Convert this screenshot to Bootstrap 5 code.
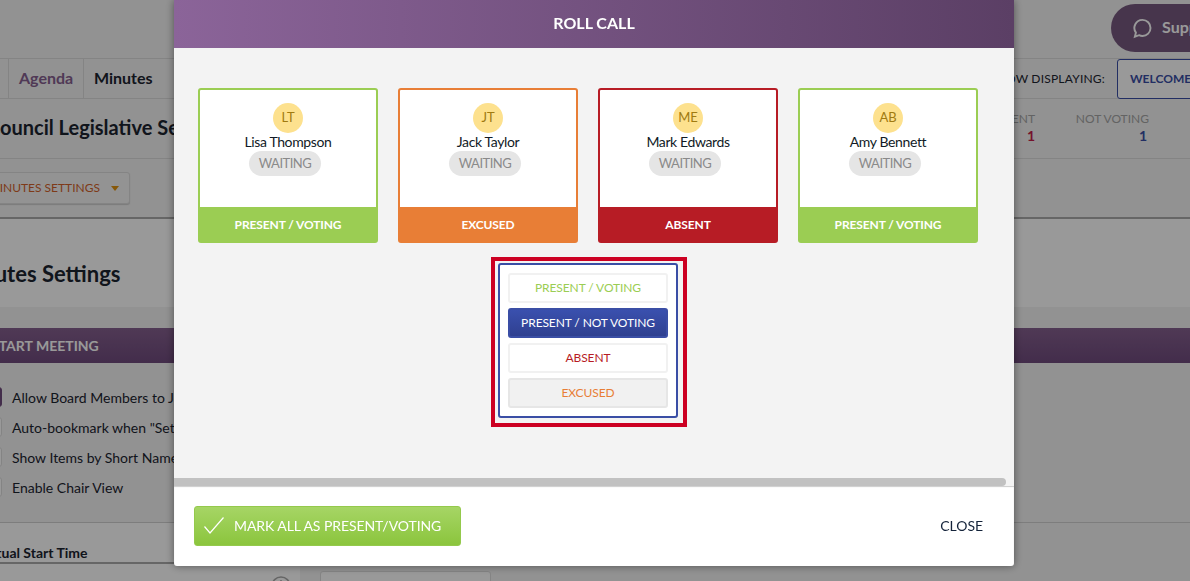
<!DOCTYPE html>
<html>
  <head>
    <title>Roll Call</title>
    <link href="https://cdn.jsdelivr.net/npm/bootstrap@5.3.3/dist/css/bootstrap.min.css" rel="stylesheet" />
    <style>
      html, body { height: 100%; overflow: hidden; }
      body { font-family: Lato, "Liberation Sans", sans-serif; color: #1c2430; background: #f3f3f3; }

      /* page behind the dialog */
      .page-wrap { width: 1190px; height: 581px; overflow: hidden; }
      .top-strip { height: 58px; padding-top: 4px; }
      .support-pill { width: 130px; height: 48px; margin-right: -51px; padding-left: 21px; border-radius: 24px 0 0 24px; background: #77597f; color: #fff; font-weight: 700; font-size: 16px; gap: 9px; }
      .support-pill span { margin-top: -2px; }
      .tab-strip { height: 41px; border-top: 1px solid #dcdcdc; border-bottom: 1px solid #dcdcdc; white-space: nowrap; }
      .tab-cell { height: 100%; padding: 0 10px 2px; border-left: 1px solid #dcdcdc; font-size: 16px; font-weight: 700; width: 75px; }
      .tab-cell.agenda { color: #85608f; }
      .tab-cell.minutes { color: #1c2430; padding-left: 10px; }
      .now-label { font-size: 12px; margin-right: 12px; letter-spacing: .2px; }
      .welcome-btn { height: 40px; width: 120px; padding: 0 12px; margin-right: -47px; border: 1px solid #3a4ea5; border-radius: 3px; background: #fff; color: #3a4ea5; font-weight: 700; font-size: 12px; }
      .title-strip { height: 60px; border-bottom: 1px solid #dcdcdc; }
      .page-title { margin: -4px 0 0 -13px; font-size: 20px; font-weight: 700; white-space: nowrap; }
      .stat-box { font-size: 12px; color: #a5a5a5; text-align: right; width: 74px; margin-left: 40px; line-height: 15px; padding-top: 13px; }
      .stat-box b { display: block; font-size: 14px; line-height: 19px; padding-right: 1px; }
      .stat-box .num-red { color: #c41e4a; padding-right: 0; }
      .stat-box .num-blue { color: #3a4ea5; padding-right: 2px; }
      .stat-strip { margin-right: -73px; }
      .tool-strip { height: 60px; padding-top: 13px; border-bottom: 2px solid #aaa; }
      .settings-btn { height: 32px; padding: 0 10px 0 0; margin-left: -10px; border: 1px solid #ddd; border-radius: 3px; background: #f6f6f6; color: #d2622a; font-size: 12px; gap: 11px; width: 140px; justify-content: flex-end; white-space: nowrap; box-shadow: 0 1px 1px #ccc; }
      .caret-down { width: 0; height: 0; border-left: 4px solid transparent; border-right: 4px solid transparent; border-top: 5px solid #e2930f; }
      .head-strip { height: 88px; background: #fff; padding-top: 42px; }
      .head-strip h2 { margin: 0 0 0 -44px; font-size: 22px; font-weight: 700; white-space: nowrap; }
      .gap-strip { height: 21px; }
      .purple-strip { height: 35px; background: linear-gradient(#85608f, #704b7d); color: #fff; font-size: 14px; font-weight: 700; }
      .purple-strip span { margin-left: -9px; white-space: nowrap; }
      .check-list { padding-top: 19px; height: 160px; border-bottom: 1px solid #d0d0d0; }
      .check-row { height: 30px; font-size: 14px; white-space: nowrap; }
      .check-box { width: 20px; height: 20px; margin-left: -18px; margin-right: 10px; border: 1px solid #ddd; border-radius: 3px; background: #fff; flex: none; }
      .check-box.on { background: #704b7d; border-color: #704b7d; }
      .time-left { width: 300px; height: 200px; background: #fff; }
      .time-label { height: 41px; border-bottom: 2px solid #aaa; padding-top: 19px; font-size: 14px; font-weight: 700; }
      .time-label span { margin-left: -20px; white-space: nowrap; }
      .clock-row { padding: 12px 9px 0 0; }
      .time-right { padding: 48px 0 0 20px; }
      .time-input { width: 171px; height: 40px; border: 1px solid #ddd; border-radius: 3px; background: #fff; }

      /* dimming layer and dialog */
      .dim-layer { position: fixed; inset: 0; background: rgba(0, 0, 0, .4); }
      .roll-dialog { position: fixed; left: 174px; top: 0; width: 840px; height: 566px; border: 0; border-radius: 0 0 3px 3px; overflow: hidden; box-shadow: 0 0 8px rgba(0, 0, 0, .45); background: #fff; }
      .roll-head { height: 48px; padding: 0 0 2px; border: 0; border-radius: 0; background: linear-gradient(to right, #8b6499, #5b3f65); color: #fff; font-size: 16px; font-weight: 700; justify-content: center; box-shadow: 0 1px 1px #ddd; }
      .roll-body { height: 430px; flex: none; padding: 40px 0 0 24px; background: #f3f3f3; }
      .member-list { width: 782px; gap: 20px; margin-bottom: 14px; }
      .pick-area { width: 782px; }
      .member-tile { width: 180px; height: 155px; border-width: 2px; border-radius: 3px; }
      .member-tile.green { border-color: #9bcd53; }
      .member-tile.orange { border-color: #e87e36; }
      .member-tile.red { border-color: #b71c25; }
      .tile-main { height: 117px; flex: none; padding-top: 13px; }
      .avatar-dot { width: 30px; height: 30px; border-radius: 50%; background: #fde18e; color: #a07a10; font-size: 13px; }
      .member-name { font-size: 14px; line-height: 18px; letter-spacing: -.38px; color: #111a26; }
      .wait-pill { width: 72px; height: 25px; margin: 0 6px 0 0; padding-top: 1px; border-radius: 13px; background: #e5e5e5; color: #8a8a8a; font-size: 13px; letter-spacing: -.5px; }
      .tile-status { flex: 1 1 auto; padding-top: 2px; color: #fff; font-size: 12px; font-weight: 700; letter-spacing: -.12px; }
      .green .tile-status { background: #9bcd53; }
      .orange .tile-status { background: #e87e36; }
      .red .tile-status { background: #b71c25; }
      .pick-mark { width: 196px; height: 170px; padding: 2px 5px 5px 3px; border: 4px solid #cc0022; }
      .pick-box { width: 180px; height: 155px; padding: 8px; gap: 5px; border: 2px solid #3a4ea5; border-radius: 3px; background: #fff; }
      .pick-btn { height: 30px; padding: 0; border: 2px solid #f1f1f1; border-radius: 3px; background: #fff; font-size: 12px; line-height: 1; letter-spacing: -.1px; }
      .pick-btn.p-voting { color: #9bcd53; }
      .pick-btn.p-not { background: linear-gradient(#3a50ae, #2f4090); border-color: #3a4ea5; color: #fff; }
      .pick-btn.p-absent { color: #b71c25; }
      .pick-btn.p-excused { background: #f1f1f1; border-color: #e6e6e6; color: #e87e36; }
      .fake-scroll { height: 8px; flex: none; width: 832px; background: #c1c1c1; border-radius: 0 4px 4px 0; }
      .scroll-row { background: #f3f3f3; }
      .roll-foot { height: 80px; padding: 20px 31px 20px 20px; border: 0; border-radius: 0; box-shadow: inset 0 1px 1px #ccc; }
      .mark-all { width: 267px; height: 40px; padding: 0 0 2px 9px; margin: 0; gap: 10px; border: 1px solid #94c94c; border-radius: 3px; background: linear-gradient(#a6d565, #8bc53d); color: #fff; font-size: 14px; letter-spacing: -.08px; }
      .close-link { margin: 0 0 2px; padding: 0; border: 0; background: none; color: #14233a; font-size: 14px; letter-spacing: -.05px; }
    </style>
  </head>
  <body>
    <div class="page-wrap">
      <div class="top-strip d-flex justify-content-end">
        <div class="support-pill d-flex align-items-center">
          <svg width="21" height="21" viewBox="0 0 22 22" fill="none" stroke="#fff" stroke-width="2"><path d="M11 2a8.4 8.4 0 0 1 0 16.8c-1.3 0-2.500-.3-3.600-.8L3 19.600l1.100-4.300A8.400 8.400 0 0 1 11 2z" /></svg>
          <span>Support</span>
        </div>
      </div>
      <div class="tab-strip d-flex align-items-center">
        <div class="d-flex align-items-center h-100 ms-2">
          <div class="tab-cell agenda d-flex align-items-center">Agenda</div>
          <div class="tab-cell minutes d-flex align-items-center">Minutes</div>
        </div>
        <div class="d-flex align-items-center ms-auto h-100">
          <span class="now-label">NOW DISPLAYING:</span>
          <div class="welcome-btn d-flex align-items-center">WELCOME</div>
        </div>
      </div>
      <div class="title-strip d-flex align-items-center justify-content-between">
        <h1 class="page-title">Council Legislative Session</h1>
        <div class="stat-strip d-flex">
          <div class="stat-box">ABSENT<b class="num-red">1</b></div>
          <div class="stat-box">NOT VOTING<b class="num-blue">1</b></div>
          <div class="stat-box">NOT PRESENT<b>0</b></div>
        </div>
      </div>
      <div class="tool-strip">
        <div class="settings-btn d-flex align-items-center">MINUTES SETTINGS<span class="caret-down"></span></div>
      </div>
      <div class="head-strip"><h2>Minutes Settings</h2></div>
      <div class="gap-strip"></div>
      <div class="purple-strip d-flex align-items-center"><span>START MEETING</span></div>
      <div class="check-list">
        <div class="check-row d-flex align-items-center"><span class="check-box on"></span>Allow Board Members to Join</div>
        <div class="check-row d-flex align-items-center"><span class="check-box"></span>Auto-bookmark when "Set</div>
        <div class="check-row d-flex align-items-center"><span class="check-box"></span>Show Items by Short Name</div>
        <div class="check-row d-flex align-items-center"><span class="check-box"></span>Enable Chair View</div>
      </div>
      <div class="d-flex">
        <div class="time-left">
          <div class="time-label"><span>Actual Start Time</span></div>
          <div class="clock-row d-flex justify-content-end">
            <svg width="20" height="20" viewBox="0 0 20 20" fill="none" stroke="#aaa" stroke-width="1.500"><circle cx="10" cy="10" r="9" /><path d="M10 4v6l4 2" /></svg>
          </div>
        </div>
        <div class="time-right"><div class="time-input"></div></div>
      </div>
    </div>

    <div class="dim-layer"></div>

    <div class="modal-content roll-dialog">
      <div class="modal-header roll-head">ROLL CALL</div>
      <div class="modal-body roll-body">
        <div class="member-list d-flex">
          <div class="card member-tile green">
            <div class="tile-main d-flex flex-column align-items-center">
              <div class="avatar-dot d-flex align-items-center justify-content-center">LT</div>
              <div class="member-name">Lisa Thompson</div>
              <div class="wait-pill d-flex align-items-center justify-content-center">WAITING</div>
            </div>
            <div class="tile-status d-flex align-items-center justify-content-center">PRESENT / VOTING</div>
          </div>
          <div class="card member-tile orange">
            <div class="tile-main d-flex flex-column align-items-center">
              <div class="avatar-dot d-flex align-items-center justify-content-center">JT</div>
              <div class="member-name">Jack Taylor</div>
              <div class="wait-pill d-flex align-items-center justify-content-center">WAITING</div>
            </div>
            <div class="tile-status d-flex align-items-center justify-content-center">EXCUSED</div>
          </div>
          <div class="card member-tile red">
            <div class="tile-main d-flex flex-column align-items-center">
              <div class="avatar-dot d-flex align-items-center justify-content-center">ME</div>
              <div class="member-name">Mark Edwards</div>
              <div class="wait-pill d-flex align-items-center justify-content-center">WAITING</div>
            </div>
            <div class="tile-status d-flex align-items-center justify-content-center">ABSENT</div>
          </div>
          <div class="card member-tile green">
            <div class="tile-main d-flex flex-column align-items-center">
              <div class="avatar-dot d-flex align-items-center justify-content-center">AB</div>
              <div class="member-name">Amy Bennett</div>
              <div class="wait-pill d-flex align-items-center justify-content-center">WAITING</div>
            </div>
            <div class="tile-status d-flex align-items-center justify-content-center">PRESENT / VOTING</div>
          </div>
        </div>
        <div class="pick-area">
          <div class="pick-mark mx-auto">
            <div class="pick-box d-flex flex-column">
              <button type="button" class="btn pick-btn p-voting">PRESENT / VOTING</button>
              <button type="button" class="btn pick-btn p-not">PRESENT / NOT VOTING</button>
              <button type="button" class="btn pick-btn p-absent">ABSENT</button>
              <button type="button" class="btn pick-btn p-excused">EXCUSED</button>
            </div>
          </div>
        </div>
      </div>
      <div class="scroll-row"><div class="fake-scroll"></div></div>
      <div class="modal-footer roll-foot justify-content-between">
        <button type="button" class="btn mark-all d-flex align-items-center">
          <svg width="20" height="17" viewBox="0 0 20 17" fill="none" stroke="#fff" stroke-width="1.2"><path d="M0.500 9.500L6 16L19.500 0.500" /></svg>
          <span>MARK ALL AS PRESENT/VOTING</span>
        </button>
        <button type="button" class="btn close-link">CLOSE</button>
      </div>
    </div>

    <script src="https://cdn.jsdelivr.net/npm/bootstrap@5.3.3/dist/js/bootstrap.bundle.min.js"></script>
  </body>
</html>
